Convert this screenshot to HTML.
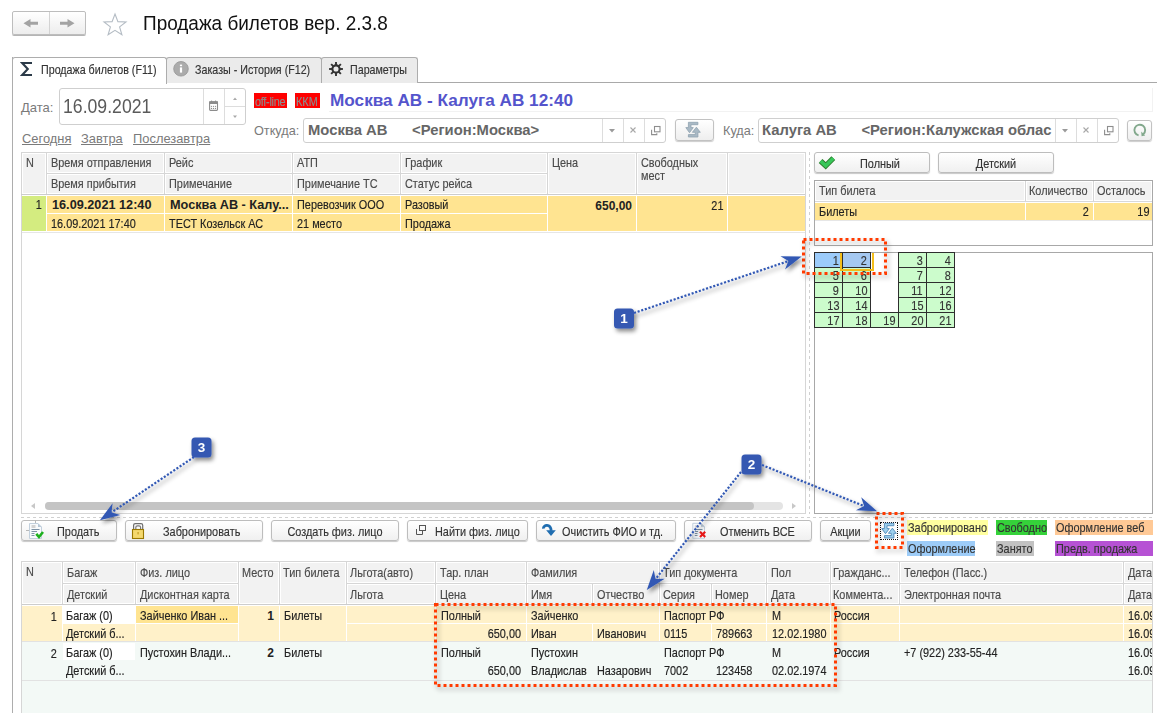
<!DOCTYPE html><html><head><meta charset="utf-8"><style>
*{margin:0;padding:0;box-sizing:border-box}
html,body{width:1157px;height:713px;overflow:hidden;background:#fff;font-family:"Liberation Sans",sans-serif;position:relative}
.t{position:absolute;white-space:nowrap;line-height:1}
.btn{position:absolute;border:1px solid #B9B9B9;border-radius:3px;background:linear-gradient(#FFFFFF,#F2F2F2);box-shadow:0 1px 1px rgba(0,0,0,0.18)}
</style></head><body><div style="position:absolute;left:12px;top:11px;width:74px;height:24px;border:1px solid #BDBDBD;border-radius:2px;background:linear-gradient(#FFFFFF,#EDEDED);box-shadow:0 1px 0 #B5B5B5"></div><div style="position:absolute;left:49px;top:12px;width:1px;height:22px;background:#D3D3D3"></div><svg style="position:absolute;left:12px;top:11px" width="74" height="24" viewBox="0 0 74 24">
<path d="M11.5 12.2 L18.5 8 V10.7 H26 V13.7 H18.5 V16.4 Z" fill="#A3A3A3"/>
<path d="M62.5 12.2 L55.5 8 V10.7 H48 V13.7 H55.5 V16.4 Z" fill="#A3A3A3"/>
</svg><svg style="position:absolute;left:102px;top:12px" width="26" height="26" viewBox="0 0 26 26">
<path d="M13 2 L15.9 9.6 L24 9.9 L17.6 14.9 L19.9 22.8 L13 18.3 L6.1 22.8 L8.4 14.9 L2 9.9 L10.1 9.6 Z" fill="none" stroke="#B4BCC4" stroke-width="1.1"/>
</svg><div class="t" style="left:143px;top:13px;font-size:20.5px;color:#111;font-weight:400;transform:scaleX(0.925);transform-origin:left">Продажа билетов вер. 2.3.8</div><div style="position:absolute;left:12px;top:82px;width:1145px;height:1px;background:#A9A9A9"></div><div style="position:absolute;left:12px;top:57px;width:1px;height:656px;background:#ADADAD"></div><div style="position:absolute;left:166px;top:57px;width:156px;height:26px;background:#EBEBEB;border:1px solid #ADADAD;border-bottom:none;border-radius:3px 3px 0 0"></div><div style="position:absolute;left:321px;top:57px;width:97px;height:26px;background:#EBEBEB;border:1px solid #ADADAD;border-bottom:none;border-radius:3px 3px 0 0"></div><div style="position:absolute;left:12px;top:57px;width:155px;height:27px;background:#fff;border:1px solid #ADADAD;border-bottom:none;border-radius:3px 3px 0 0"></div><svg style="position:absolute;left:20px;top:61px" width="14" height="16" viewBox="0 0 14 16">
<path d="M12 2 H2.2 L7.8 8 L2.2 14 H12" stroke="#2B3A48" stroke-width="2.1" fill="none" stroke-linejoin="miter"/>
</svg><div class="t" style="left:41px;top:65.0px;font-size:11.88px;color:#333;font-weight:400;;transform:scaleX(0.9);transform-origin:left;-webkit-text-stroke:0.15px currentColor">Продажа билетов (F11)</div><svg style="position:absolute;left:173px;top:61px" width="16" height="16" viewBox="0 0 16 16">
<circle cx="8" cy="7.8" r="7.3" fill="#ABABAB" stroke="#969696" stroke-width="0.8"/><rect x="6.9" y="3.6" width="2.2" height="1.6" fill="#fff"/><rect x="6.9" y="6.4" width="2.2" height="5.2" fill="#fff"/>
</svg><div class="t" style="left:195px;top:65.0px;font-size:11.88px;color:#333;font-weight:400;;transform:scaleX(0.9);transform-origin:left;-webkit-text-stroke:0.15px currentColor">Заказы - История (F12)</div><svg style="position:absolute;left:328px;top:61px" width="16" height="16" viewBox="0 0 16 16">
<circle cx="8" cy="8" r="3.6" fill="none" stroke="#333" stroke-width="2.1"/><path d="M11.60 8.00 L14.90 8.00" stroke="#333" stroke-width="1.9"/><path d="M10.55 10.55 L12.88 12.88" stroke="#333" stroke-width="1.9"/><path d="M8.00 11.60 L8.00 14.90" stroke="#333" stroke-width="1.9"/><path d="M5.45 10.55 L3.12 12.88" stroke="#333" stroke-width="1.9"/><path d="M4.40 8.00 L1.10 8.00" stroke="#333" stroke-width="1.9"/><path d="M5.45 5.45 L3.12 3.12" stroke="#333" stroke-width="1.9"/><path d="M8.00 4.40 L8.00 1.10" stroke="#333" stroke-width="1.9"/><path d="M10.55 5.45 L12.88 3.12" stroke="#333" stroke-width="1.9"/>
</svg><div class="t" style="left:350px;top:65.0px;font-size:11.88px;color:#333;font-weight:400;;transform:scaleX(0.9);transform-origin:left;-webkit-text-stroke:0.15px currentColor">Параметры</div><div class="t" style="left:21px;top:101px;font-size:13px;color:#7A7A7A;font-weight:400;">Дата:</div><div style="position:absolute;left:59px;top:88px;width:187px;height:37px;border:1px solid #CFCFCF;border-radius:3px;background:#fff"></div><div style="position:absolute;left:203px;top:89px;width:1px;height:35px;background:#DDDDDD"></div><div style="position:absolute;left:224px;top:89px;width:1px;height:35px;background:#DDDDDD"></div><div style="position:absolute;left:225px;top:106px;width:20px;height:1px;background:#DDDDDD"></div><div class="t" style="left:63px;top:97px;font-size:19.5px;color:#5A5A5A;font-weight:400;transform:scaleX(0.905);transform-origin:left">16.09.2021</div><svg style="position:absolute;left:208px;top:100px" width="11" height="12" viewBox="0 0 11 12">
<rect x="1.6" y="1.9" width="7.9" height="8.5" rx="0.8" fill="#fff" stroke="#8C8C8C" stroke-width="1.1"/>
<rect x="1.1" y="1.4" width="8.9" height="2.6" fill="#8C8C8C"/>
<rect x="3" y="0.6" width="1.1" height="1.6" fill="#8C8C8C"/><rect x="7" y="0.6" width="1.1" height="1.6" fill="#8C8C8C"/>
<g fill="#8C8C8C"><circle cx="3.5" cy="6.3" r="0.65"/><circle cx="5.5" cy="6.3" r="0.65"/><circle cx="7.5" cy="6.3" r="0.65"/>
<circle cx="3.5" cy="8.4" r="0.65"/><circle cx="5.5" cy="8.4" r="0.65"/><circle cx="7.5" cy="8.4" r="0.65"/></g>
</svg><svg style="position:absolute;left:231px;top:96px" width="8" height="24" viewBox="0 0 8 24">
<path d="M2 4 L6 4 L4 1.5 Z" fill="#A8A8A8"/><path d="M2 19.5 L6 19.5 L4 22 Z" fill="#A8A8A8"/>
</svg><div class="t" style="left:22px;top:133px;font-size:12.9px;color:#7A7A7A;font-weight:400;text-decoration:underline;">Сегодня</div><div class="t" style="left:81px;top:133px;font-size:12.9px;color:#7A7A7A;font-weight:400;text-decoration:underline;">Завтра</div><div class="t" style="left:133px;top:133px;font-size:12.9px;color:#7A7A7A;font-weight:400;text-decoration:underline;">Послезавтра</div><div style="position:absolute;left:254px;top:93px;width:33px;height:15px;background:#FF0000"></div><div class="t" style="left:255px;top:96.0px;font-size:12.10px;color:#8C8C8C;font-weight:400;letter-spacing:-0.3px;transform:scaleX(0.9);transform-origin:left;-webkit-text-stroke:0.15px currentColor">off-line</div><div style="position:absolute;left:295px;top:93px;width:25px;height:15px;background:#FF0000"></div><div class="t" style="left:296px;top:96.0px;font-size:12.10px;color:#8C8C8C;font-weight:400;;transform:scaleX(0.9);transform-origin:left;-webkit-text-stroke:0.15px currentColor">ККМ</div><div class="t" style="left:330px;top:92px;font-size:17.2px;color:#5454CC;font-weight:700;">Москва АВ - Калуга АВ 12:40</div><div style="position:absolute;left:329px;top:88px;width:824px;height:24px;border-right:1px solid #F2F2F2;border-bottom:1px solid #F2F2F2"></div><div class="t" style="left:254px;top:125px;font-size:12.7px;color:#7A7A7A;font-weight:400;">Откуда:</div><div style="position:absolute;left:303px;top:118px;width:363px;height:25px;border:1px solid #CFCFCF;border-radius:3px;background:#fff"></div><div style="position:absolute;left:602px;top:119px;width:1px;height:23px;background:#DDDDDD"></div><div style="position:absolute;left:623px;top:119px;width:1px;height:23px;background:#DDDDDD"></div><div style="position:absolute;left:644px;top:119px;width:1px;height:23px;background:#DDDDDD"></div><div class="t" style="left:308px;top:123px;font-size:14.8px;color:#666;font-weight:700;">Москва АВ&nbsp;&nbsp;&nbsp;&nbsp;&nbsp;&nbsp;&lt;Регион:Москва&gt;</div><svg style="position:absolute;left:602px;top:119px" width="63" height="23" viewBox="0 0 63 23">
<path d="M7 10 L13 10 L10 13.5 Z" fill="#9A9A9A"/>
<path d="M28.5 8.5 L33.5 13.5 M33.5 8.5 L28.5 13.5" stroke="#A8A8A8" stroke-width="1.1"/>
<rect x="52.5" y="7.5" width="5.5" height="5.3" fill="none" stroke="#8E8E8E" stroke-width="1.1"/>
<path d="M49.6 10.8 V15.6 H54.8 V14.3" fill="none" stroke="#8E8E8E" stroke-width="1.1"/>
</svg><div style="position:absolute;left:675px;top:119px;width:39px;height:22px;border:1px solid #C2C2C2;border-radius:3px;background:linear-gradient(#FFFFFF,#EEEEEE);box-shadow:0 1px 1px rgba(0,0,0,0.2)"></div><svg style="position:absolute;left:684px;top:121px" width="18" height="18" viewBox="0 0 18 18">
<path d="M13.9 1.3 V3.7 H7 V6.6 H9.3 L5.5 11.7 L1.8 6.6 H4.4 V1.3 Z" fill="#A9B9C5" stroke="#8FA2B0" stroke-width="0.8"/>
<path d="M12.4 6.2 L16.3 11.3 H13.9 V16 H4.4 V13.6 H11.3 V11.3 H8.4 Z" fill="#A9B9C5" stroke="#8FA2B0" stroke-width="0.8"/>
</svg><div class="t" style="left:723px;top:125px;font-size:12.7px;color:#7A7A7A;font-weight:400;">Куда:</div><div style="position:absolute;left:758px;top:118px;width:361px;height:25px;border:1px solid #CFCFCF;border-radius:3px;background:#fff"></div><div style="position:absolute;left:1055px;top:119px;width:1px;height:23px;background:#DDDDDD"></div><div style="position:absolute;left:1076px;top:119px;width:1px;height:23px;background:#DDDDDD"></div><div style="position:absolute;left:1097px;top:119px;width:1px;height:23px;background:#DDDDDD"></div><div class="t" style="left:762px;top:123px;font-size:14.8px;color:#666;font-weight:700;">Калуга АВ&nbsp;&nbsp;&nbsp;&nbsp;&nbsp;&nbsp;&lt;Регион:Калужская облас</div><svg style="position:absolute;left:1055px;top:119px" width="63" height="23" viewBox="0 0 63 23">
<path d="M7 10 L13 10 L10 13.5 Z" fill="#9A9A9A"/>
<path d="M28.5 8.5 L33.5 13.5 M33.5 8.5 L28.5 13.5" stroke="#A8A8A8" stroke-width="1.1"/>
<rect x="52.5" y="7.5" width="5.5" height="5.3" fill="none" stroke="#8E8E8E" stroke-width="1.1"/>
<path d="M49.6 10.8 V15.6 H54.8 V14.3" fill="none" stroke="#8E8E8E" stroke-width="1.1"/>
</svg><div style="position:absolute;left:1127px;top:120px;width:25px;height:21px;border:1px solid #C2C2C2;border-radius:3px;background:linear-gradient(#FFFFFF,#EEEEEE);box-shadow:0 1px 1px rgba(0,0,0,0.2)"></div><svg style="position:absolute;left:1132px;top:122px" width="16" height="16" viewBox="0 0 16 16">
<path d="M6.6 13.4 A5.4 5.4 0 1 1 11.2 12.3" fill="none" stroke="#82A88C" stroke-width="1.9"/>
<path d="M9.2 9.6 L13.2 13.6 L9.6 14.2 Z" fill="#82A88C"/>
</svg><div style="position:absolute;left:21px;top:152px;width:785px;height:362px;border:1px solid #D6D6D6;background:#fff"></div><div style="position:absolute;left:21px;top:194px;width:784px;height:1px;background:#CDCDCD"></div><div style="position:absolute;left:46px;top:153px;width:1px;height:41px;background:#D6D6D6"></div><div style="position:absolute;left:164px;top:153px;width:1px;height:41px;background:#D6D6D6"></div><div style="position:absolute;left:292px;top:153px;width:1px;height:41px;background:#D6D6D6"></div><div style="position:absolute;left:400px;top:153px;width:1px;height:41px;background:#D6D6D6"></div><div style="position:absolute;left:547px;top:153px;width:1px;height:41px;background:#D6D6D6"></div><div style="position:absolute;left:636px;top:153px;width:1px;height:41px;background:#D6D6D6"></div><div style="position:absolute;left:727px;top:153px;width:1px;height:41px;background:#D6D6D6"></div><div style="position:absolute;left:46px;top:173px;width:501px;height:1px;background:#D6D6D6"></div><div style="position:absolute;left:22px;top:153px;width:24px;height:41px;background:#F2F2F2;box-shadow:inset 0 0 0 1px #fff"></div><div class="t" style="left:26px;top:157.0px;font-size:12.10px;color:#4A4A4A;transform:scaleX(0.9);transform-origin:left;-webkit-text-stroke:0.15px currentColor">N</div><div style="position:absolute;left:47px;top:153px;width:117px;height:20px;background:#F2F2F2;box-shadow:inset 0 0 0 1px #fff"></div><div class="t" style="left:51px;top:157.0px;font-size:12.10px;color:#4A4A4A;transform:scaleX(0.9);transform-origin:left;-webkit-text-stroke:0.15px currentColor">Время отправления</div><div style="position:absolute;left:47px;top:174px;width:117px;height:20px;background:#F2F2F2;box-shadow:inset 0 0 0 1px #fff"></div><div class="t" style="left:51px;top:178.0px;font-size:12.10px;color:#4A4A4A;transform:scaleX(0.9);transform-origin:left;-webkit-text-stroke:0.15px currentColor">Время прибытия</div><div style="position:absolute;left:165px;top:153px;width:127px;height:20px;background:#F2F2F2;box-shadow:inset 0 0 0 1px #fff"></div><div class="t" style="left:169px;top:157.0px;font-size:12.10px;color:#4A4A4A;transform:scaleX(0.9);transform-origin:left;-webkit-text-stroke:0.15px currentColor">Рейс</div><div style="position:absolute;left:165px;top:174px;width:127px;height:20px;background:#F2F2F2;box-shadow:inset 0 0 0 1px #fff"></div><div class="t" style="left:169px;top:178.0px;font-size:12.10px;color:#4A4A4A;transform:scaleX(0.9);transform-origin:left;-webkit-text-stroke:0.15px currentColor">Примечание</div><div style="position:absolute;left:293px;top:153px;width:107px;height:20px;background:#F2F2F2;box-shadow:inset 0 0 0 1px #fff"></div><div class="t" style="left:297px;top:157.0px;font-size:12.10px;color:#4A4A4A;transform:scaleX(0.9);transform-origin:left;-webkit-text-stroke:0.15px currentColor">АТП</div><div style="position:absolute;left:293px;top:174px;width:107px;height:20px;background:#F2F2F2;box-shadow:inset 0 0 0 1px #fff"></div><div class="t" style="left:297px;top:178.0px;font-size:12.10px;color:#4A4A4A;transform:scaleX(0.9);transform-origin:left;-webkit-text-stroke:0.15px currentColor">Примечание ТС</div><div style="position:absolute;left:401px;top:153px;width:146px;height:20px;background:#F2F2F2;box-shadow:inset 0 0 0 1px #fff"></div><div class="t" style="left:405px;top:157.0px;font-size:12.10px;color:#4A4A4A;transform:scaleX(0.9);transform-origin:left;-webkit-text-stroke:0.15px currentColor">График</div><div style="position:absolute;left:401px;top:174px;width:146px;height:20px;background:#F2F2F2;box-shadow:inset 0 0 0 1px #fff"></div><div class="t" style="left:405px;top:178.0px;font-size:12.10px;color:#4A4A4A;transform:scaleX(0.9);transform-origin:left;-webkit-text-stroke:0.15px currentColor">Статус рейса</div><div style="position:absolute;left:548px;top:153px;width:88px;height:41px;background:#F2F2F2;box-shadow:inset 0 0 0 1px #fff"></div><div class="t" style="left:552px;top:157.0px;font-size:12.10px;color:#4A4A4A;transform:scaleX(0.9);transform-origin:left;-webkit-text-stroke:0.15px currentColor">Цена</div><div style="position:absolute;left:637px;top:153px;width:90px;height:41px;background:#F2F2F2;box-shadow:inset 0 0 0 1px #fff"></div><div class="t" style="left:641px;top:157.0px;font-size:12.10px;color:#4A4A4A;line-height:13px;transform:scaleX(0.9);transform-origin:left;-webkit-text-stroke:0.15px currentColor">Свободных<br>мест</div><div style="position:absolute;left:728px;top:153px;width:77px;height:41px;background:#F2F2F2;box-shadow:inset 0 0 0 1px #fff"></div><div style="position:absolute;left:22px;top:195px;width:783px;height:37px;background:#fff"></div><div style="position:absolute;left:22px;top:196px;width:24px;height:35px;background:#D4EC80"></div><div class="t" style="right:1115px;top:199.0px;font-size:12.10px;color:#222;font-weight:400;transform:scaleX(0.9);transform-origin:right;-webkit-text-stroke:0.15px currentColor">1</div><div style="position:absolute;left:47px;top:196px;width:117px;height:17px;background:#FFE491"></div><div class="t" style="left:52px;top:199px;font-size:12.7px;color:#222;font-weight:700">16.09.2021 12:40</div><div style="position:absolute;left:47px;top:214px;width:117px;height:17px;background:#FFE491"></div><div class="t" style="left:51px;top:218.0px;font-size:12.10px;color:#222;font-weight:400;transform:scaleX(0.9);transform-origin:left;-webkit-text-stroke:0.15px currentColor">16.09.2021 17:40</div><div style="position:absolute;left:165px;top:196px;width:127px;height:17px;background:#FFE491"></div><div class="t" style="left:170px;top:199px;font-size:12.7px;color:#222;font-weight:700">Москва АВ - Калу...</div><div style="position:absolute;left:165px;top:214px;width:127px;height:17px;background:#FFE491"></div><div class="t" style="left:169px;top:218.0px;font-size:12.10px;color:#222;font-weight:400;transform:scaleX(0.9);transform-origin:left;-webkit-text-stroke:0.15px currentColor">ТЕСТ Козельск АС</div><div style="position:absolute;left:293px;top:196px;width:107px;height:17px;background:#FFE491"></div><div class="t" style="left:297px;top:199.0px;font-size:12.10px;color:#222;font-weight:400;transform:scaleX(0.9);transform-origin:left;-webkit-text-stroke:0.15px currentColor">Перевозчик ООО</div><div style="position:absolute;left:293px;top:214px;width:107px;height:17px;background:#FFE491"></div><div class="t" style="left:297px;top:218.0px;font-size:12.10px;color:#222;font-weight:400;transform:scaleX(0.9);transform-origin:left;-webkit-text-stroke:0.15px currentColor">21 место</div><div style="position:absolute;left:401px;top:196px;width:146px;height:17px;background:#FFE491"></div><div class="t" style="left:405px;top:199.0px;font-size:12.10px;color:#222;font-weight:400;transform:scaleX(0.9);transform-origin:left;-webkit-text-stroke:0.15px currentColor">Разовый</div><div style="position:absolute;left:401px;top:214px;width:146px;height:17px;background:#FFE491"></div><div class="t" style="left:405px;top:218.0px;font-size:12.10px;color:#222;font-weight:400;transform:scaleX(0.9);transform-origin:left;-webkit-text-stroke:0.15px currentColor">Продажа</div><div style="position:absolute;left:548px;top:196px;width:88px;height:35px;background:#FFE491"></div><div class="t" style="right:525px;top:200px;font-size:12px;color:#222;font-weight:700">650,00</div><div style="position:absolute;left:637px;top:196px;width:90px;height:35px;background:#FFE491"></div><div class="t" style="right:434px;top:200.0px;font-size:12.10px;color:#222;font-weight:400;transform:scaleX(0.9);transform-origin:right;-webkit-text-stroke:0.15px currentColor">21</div><div style="position:absolute;left:728px;top:196px;width:77px;height:35px;background:#FFE491"></div><div style="position:absolute;left:22px;top:232px;width:783px;height:1px;background:#E6E6E6"></div><svg style="position:absolute;left:28px;top:501px" width="775" height="10" viewBox="0 0 775 10">
<path d="M3 5 L7 2 L7 8 Z" fill="#C8C8C8"/>
<rect x="17" y="1" width="738" height="8" rx="4" fill="#E4E4E4"/>
<rect x="17" y="1" width="709" height="8" rx="4" fill="#C4C4C4"/>
<path d="M764 2 L768 5 L764 8 Z" fill="#C8C8C8"/>
</svg><div style="position:absolute;left:809px;top:152px;width:1px;height:362px;background:repeating-linear-gradient(180deg,#D0D0D0 0 3px,transparent 3px 6px)"></div><div style="position:absolute;left:21px;top:517px;width:1132px;height:1px;background:repeating-linear-gradient(90deg,#D0D0D0 0 3px,transparent 3px 6px)"></div><div style="position:absolute;left:814px;top:152px;width:116px;height:21px;border:1px solid #BDBDBD;border-radius:3px;background:linear-gradient(#FFFFFF,#F0F0F0);box-shadow:0 1px 1px rgba(0,0,0,0.22)"></div><div class="t" style="left:860px;top:158.0px;font-size:12.10px;color:#333;transform:scaleX(0.9);transform-origin:left;-webkit-text-stroke:0.15px currentColor">Полный</div><svg style="position:absolute;left:812px;top:150px" width="30" height="26" viewBox="812 150 30 26">
<path d="M820.6 161 L825.7 165.8 L833.3 158.2" fill="none" stroke="#2C7A2C" stroke-width="5.4" stroke-linejoin="miter" stroke-linecap="butt"/>
<path d="M820.6 161 L825.7 165.8 L833.3 158.2" fill="none" stroke="#38C659" stroke-width="3.6" stroke-linejoin="miter" stroke-linecap="butt"/>
</svg><div style="position:absolute;left:938px;top:152px;width:116px;height:21px;border:1px solid #BDBDBD;border-radius:3px;background:linear-gradient(#FFFFFF,#F0F0F0);box-shadow:0 1px 1px rgba(0,0,0,0.22)"></div><div class="t" style="left:938px;width:116px;text-align:center;top:158.0px;font-size:12.10px;color:#333;transform:scaleX(0.9);transform-origin:center;-webkit-text-stroke:0.15px currentColor">Детский</div><div style="position:absolute;left:814px;top:180px;width:339px;height:66px;border:1px solid #A8A8A8;background:#fff"></div><div style="position:absolute;left:815px;top:181px;width:210px;height:20px;background:#F2F2F2;box-shadow:inset 0 0 0 1px #fff"></div><div class="t" style="left:819px;top:185.0px;font-size:12.10px;color:#4A4A4A;transform:scaleX(0.9);transform-origin:left;-webkit-text-stroke:0.15px currentColor">Тип билета</div><div style="position:absolute;left:1026px;top:181px;width:67px;height:20px;background:#F2F2F2;box-shadow:inset 0 0 0 1px #fff"></div><div class="t" style="left:1029px;top:185.0px;font-size:12.10px;color:#4A4A4A;transform:scaleX(0.9);transform-origin:left;-webkit-text-stroke:0.15px currentColor">Количество</div><div style="position:absolute;left:1094px;top:181px;width:58px;height:20px;background:#F2F2F2;box-shadow:inset 0 0 0 1px #fff"></div><div class="t" style="left:1097px;top:185.0px;font-size:12.10px;color:#4A4A4A;transform:scaleX(0.9);transform-origin:left;-webkit-text-stroke:0.15px currentColor">Осталось</div><div style="position:absolute;left:1025px;top:181px;width:1px;height:20px;background:#D6D6D6"></div><div style="position:absolute;left:1093px;top:181px;width:1px;height:20px;background:#D6D6D6"></div><div style="position:absolute;left:815px;top:201px;width:337px;height:1px;background:#D8D8D8"></div><div style="position:absolute;left:815px;top:203px;width:210px;height:17px;background:#FFE491"></div><div class="t" style="left:819px;top:206.0px;font-size:12.10px;color:#222;font-weight:400;transform:scaleX(0.9);transform-origin:left;-webkit-text-stroke:0.15px currentColor">Билеты</div><div style="position:absolute;left:1026px;top:203px;width:67px;height:17px;background:#FFE491"></div><div class="t" style="right:68px;top:206.0px;font-size:12.10px;color:#222;font-weight:400;transform:scaleX(0.9);transform-origin:right;-webkit-text-stroke:0.15px currentColor">2</div><div style="position:absolute;left:1094px;top:203px;width:58px;height:17px;background:#FFE491"></div><div class="t" style="right:8px;top:206.0px;font-size:12.10px;color:#222;font-weight:400;transform:scaleX(0.9);transform-origin:right;-webkit-text-stroke:0.15px currentColor">19</div><div style="position:absolute;left:815px;top:220px;width:337px;height:1px;background:#E6E6E6"></div><div style="position:absolute;left:814px;top:252px;width:339px;height:262px;border:1px solid #A8A8A8;background:#fff"></div><div style="position:absolute;left:814px;top:252px;width:29px;height:16px;background:#9CCBFA;border:1px solid #2E2E2E"></div><div class="t" style="right:318px;top:255.0px;font-size:12.10px;color:#333;transform:scaleX(0.9);transform-origin:right;-webkit-text-stroke:0.15px currentColor">1</div><div style="position:absolute;left:842px;top:252px;width:29px;height:16px;background:#A5C8F0;border:1px solid #2E2E2E"></div><div class="t" style="right:290px;top:255.0px;font-size:12.10px;color:#333;transform:scaleX(0.9);transform-origin:right;-webkit-text-stroke:0.15px currentColor">2</div><div style="position:absolute;left:898px;top:252px;width:29px;height:16px;background:#CCFCCC;border:1px solid #2E2E2E"></div><div class="t" style="right:234px;top:255.0px;font-size:12.10px;color:#333;transform:scaleX(0.9);transform-origin:right;-webkit-text-stroke:0.15px currentColor">3</div><div style="position:absolute;left:926px;top:252px;width:29px;height:16px;background:#CCFCCC;border:1px solid #2E2E2E"></div><div class="t" style="right:206px;top:255.0px;font-size:12.10px;color:#333;transform:scaleX(0.9);transform-origin:right;-webkit-text-stroke:0.15px currentColor">4</div><div style="position:absolute;left:814px;top:267px;width:29px;height:16px;background:#CCFCCC;border:1px solid #2E2E2E"></div><div class="t" style="right:318px;top:270.0px;font-size:12.10px;color:#333;transform:scaleX(0.9);transform-origin:right;-webkit-text-stroke:0.15px currentColor">5</div><div style="position:absolute;left:842px;top:267px;width:29px;height:16px;background:#CCFCCC;border:1px solid #2E2E2E"></div><div class="t" style="right:290px;top:270.0px;font-size:12.10px;color:#333;transform:scaleX(0.9);transform-origin:right;-webkit-text-stroke:0.15px currentColor">6</div><div style="position:absolute;left:898px;top:267px;width:29px;height:16px;background:#CCFCCC;border:1px solid #2E2E2E"></div><div class="t" style="right:234px;top:270.0px;font-size:12.10px;color:#333;transform:scaleX(0.9);transform-origin:right;-webkit-text-stroke:0.15px currentColor">7</div><div style="position:absolute;left:926px;top:267px;width:29px;height:16px;background:#CCFCCC;border:1px solid #2E2E2E"></div><div class="t" style="right:206px;top:270.0px;font-size:12.10px;color:#333;transform:scaleX(0.9);transform-origin:right;-webkit-text-stroke:0.15px currentColor">8</div><div style="position:absolute;left:814px;top:282px;width:29px;height:16px;background:#CCFCCC;border:1px solid #2E2E2E"></div><div class="t" style="right:318px;top:285.0px;font-size:12.10px;color:#333;transform:scaleX(0.9);transform-origin:right;-webkit-text-stroke:0.15px currentColor">9</div><div style="position:absolute;left:842px;top:282px;width:29px;height:16px;background:#CCFCCC;border:1px solid #2E2E2E"></div><div class="t" style="right:290px;top:285.0px;font-size:12.10px;color:#333;transform:scaleX(0.9);transform-origin:right;-webkit-text-stroke:0.15px currentColor">10</div><div style="position:absolute;left:898px;top:282px;width:29px;height:16px;background:#CCFCCC;border:1px solid #2E2E2E"></div><div class="t" style="right:234px;top:285.0px;font-size:12.10px;color:#333;transform:scaleX(0.9);transform-origin:right;-webkit-text-stroke:0.15px currentColor">11</div><div style="position:absolute;left:926px;top:282px;width:29px;height:16px;background:#CCFCCC;border:1px solid #2E2E2E"></div><div class="t" style="right:206px;top:285.0px;font-size:12.10px;color:#333;transform:scaleX(0.9);transform-origin:right;-webkit-text-stroke:0.15px currentColor">12</div><div style="position:absolute;left:814px;top:297px;width:29px;height:16px;background:#CCFCCC;border:1px solid #2E2E2E"></div><div class="t" style="right:318px;top:300.0px;font-size:12.10px;color:#333;transform:scaleX(0.9);transform-origin:right;-webkit-text-stroke:0.15px currentColor">13</div><div style="position:absolute;left:842px;top:297px;width:29px;height:16px;background:#CCFCCC;border:1px solid #2E2E2E"></div><div class="t" style="right:290px;top:300.0px;font-size:12.10px;color:#333;transform:scaleX(0.9);transform-origin:right;-webkit-text-stroke:0.15px currentColor">14</div><div style="position:absolute;left:898px;top:297px;width:29px;height:16px;background:#CCFCCC;border:1px solid #2E2E2E"></div><div class="t" style="right:234px;top:300.0px;font-size:12.10px;color:#333;transform:scaleX(0.9);transform-origin:right;-webkit-text-stroke:0.15px currentColor">15</div><div style="position:absolute;left:926px;top:297px;width:29px;height:16px;background:#CCFCCC;border:1px solid #2E2E2E"></div><div class="t" style="right:206px;top:300.0px;font-size:12.10px;color:#333;transform:scaleX(0.9);transform-origin:right;-webkit-text-stroke:0.15px currentColor">16</div><div style="position:absolute;left:814px;top:312px;width:29px;height:16px;background:#CCFCCC;border:1px solid #2E2E2E"></div><div class="t" style="right:318px;top:315.0px;font-size:12.10px;color:#333;transform:scaleX(0.9);transform-origin:right;-webkit-text-stroke:0.15px currentColor">17</div><div style="position:absolute;left:842px;top:312px;width:29px;height:16px;background:#CCFCCC;border:1px solid #2E2E2E"></div><div class="t" style="right:290px;top:315.0px;font-size:12.10px;color:#333;transform:scaleX(0.9);transform-origin:right;-webkit-text-stroke:0.15px currentColor">18</div><div style="position:absolute;left:870px;top:312px;width:29px;height:16px;background:#CCFCCC;border:1px solid #2E2E2E"></div><div class="t" style="right:262px;top:315.0px;font-size:12.10px;color:#333;transform:scaleX(0.9);transform-origin:right;-webkit-text-stroke:0.15px currentColor">19</div><div style="position:absolute;left:898px;top:312px;width:29px;height:16px;background:#CCFCCC;border:1px solid #2E2E2E"></div><div class="t" style="right:234px;top:315.0px;font-size:12.10px;color:#333;transform:scaleX(0.9);transform-origin:right;-webkit-text-stroke:0.15px currentColor">20</div><div style="position:absolute;left:926px;top:312px;width:29px;height:16px;background:#CCFCCC;border:1px solid #2E2E2E"></div><div class="t" style="right:206px;top:315.0px;font-size:12.10px;color:#333;transform:scaleX(0.9);transform-origin:right;-webkit-text-stroke:0.15px currentColor">21</div><div style="position:absolute;left:840px;top:253px;width:34px;height:18px;border:2px solid #F4BE1A;border-top:none"></div><div style="position:absolute;left:21px;top:520px;width:96px;height:21px;border:1px solid #BDBDBD;border-radius:3px;background:linear-gradient(#FFFFFF,#F0F0F0);box-shadow:0 1px 1px rgba(0,0,0,0.22)"></div><div class="t" style="left:57px;top:526.0px;font-size:12.10px;color:#333;transform:scaleX(0.9);transform-origin:left;-webkit-text-stroke:0.15px currentColor">Продать</div><svg style="position:absolute;left:20px;top:518px" width="30" height="25" viewBox="20 518 30 25">
<path d="M29.5 523.5 H38 L41.5 527 V538.5 H29.5 Z" fill="#F8FAFC" stroke="#C2D0DD"/>
<path d="M38 523.5 V527 H41.5 Z" fill="#B5C6D6"/>
<rect x="31.5" y="525" width="4" height="3" fill="#D3D3D3"/>
<g stroke="#7D92A6" stroke-width="1"><path d="M31.5 529.5 H39.5"/><path d="M31.5 531.5 H37"/><path d="M31.5 533.5 H34.5"/><path d="M31.5 535.5 H34.5"/></g>
<path d="M26 530.5 H29" stroke="#B8B8B8"/><path d="M35.5 520 V523" stroke="#B8B8B8"/>
<path d="M36.3 533.8 L39 537 L43 532" fill="none" stroke="#1DB01D" stroke-width="2.6"/>
</svg><div style="position:absolute;left:125px;top:520px;width:138px;height:21px;border:1px solid #BDBDBD;border-radius:3px;background:linear-gradient(#FFFFFF,#F0F0F0);box-shadow:0 1px 1px rgba(0,0,0,0.22)"></div><div class="t" style="left:163px;top:526.0px;font-size:12.10px;color:#333;transform:scaleX(0.9);transform-origin:left;-webkit-text-stroke:0.15px currentColor">Забронировать</div><svg style="position:absolute;left:125px;top:518px" width="25" height="25" viewBox="125 518 25 25">
<path d="M133.6 529 V525.3 Q133.6 523.6 135.3 523.6 H141 Q142.7 523.6 142.7 525.3 V529" fill="none" stroke="#6E6E6E" stroke-width="1.2"/>
<path d="M135.8 529 V527.4 Q135.8 525.8 137.4 525.8 H139 Q140.6 525.8 140.6 527.4 V529" fill="none" stroke="#7A7A7A" stroke-width="1.2"/>
<rect x="132.5" y="529.5" width="11" height="9" fill="#F4D86E" stroke="#9A7800" stroke-width="1.1"/>
<rect x="137.4" y="532" width="1.4" height="2.4" fill="#C9A32E"/>
</svg><div style="position:absolute;left:271px;top:520px;width:128px;height:21px;border:1px solid #BDBDBD;border-radius:3px;background:linear-gradient(#FFFFFF,#F0F0F0);box-shadow:0 1px 1px rgba(0,0,0,0.22)"></div><div class="t" style="left:271px;width:128px;text-align:center;top:526.0px;font-size:12.10px;color:#333;transform:scaleX(0.9);transform-origin:center;-webkit-text-stroke:0.15px currentColor">Создать физ. лицо</div><div style="position:absolute;left:407px;top:520px;width:121px;height:21px;border:1px solid #BDBDBD;border-radius:3px;background:linear-gradient(#FFFFFF,#F0F0F0);box-shadow:0 1px 1px rgba(0,0,0,0.22)"></div><div class="t" style="left:435px;top:526.0px;font-size:12.10px;color:#333;transform:scaleX(0.9);transform-origin:left;-webkit-text-stroke:0.15px currentColor">Найти физ. лицо</div><svg style="position:absolute;left:416px;top:525px" width="11" height="11" viewBox="0 0 11 11">
<rect x="3.5" y="0.5" width="6" height="5" fill="none" stroke="#555"/>
<path d="M0.5 4 V9.5 H6.5 V6" fill="none" stroke="#555"/>
</svg><div style="position:absolute;left:536px;top:520px;width:140px;height:21px;border:1px solid #BDBDBD;border-radius:3px;background:linear-gradient(#FFFFFF,#F0F0F0);box-shadow:0 1px 1px rgba(0,0,0,0.22)"></div><div class="t" style="left:562px;top:526.0px;font-size:12.10px;color:#333;transform:scaleX(0.9);transform-origin:left;-webkit-text-stroke:0.15px currentColor">Очистить ФИО и тд.</div><svg style="position:absolute;left:535px;top:518px" width="25" height="25" viewBox="535 518 25 25">
<path d="M543.4 528.6 C543.2 524.6 550.6 523.4 551.2 530.8" fill="none" stroke="#1F6DB0" stroke-width="2.8"/>
<path d="M546.2 530.2 H555.8 L551 536 Z" fill="#1F6DB0"/>
</svg><div style="position:absolute;left:684px;top:520px;width:128px;height:21px;border:1px solid #BDBDBD;border-radius:3px;background:linear-gradient(#FFFFFF,#F0F0F0);box-shadow:0 1px 1px rgba(0,0,0,0.22)"></div><div class="t" style="left:720px;top:526.0px;font-size:12.10px;color:#333;transform:scaleX(0.9);transform-origin:left;-webkit-text-stroke:0.15px currentColor">Отменить ВСЕ</div><svg style="position:absolute;left:684px;top:516px" width="30" height="30" viewBox="684 516 30 30">
<path d="M692.8 523.3 H701 L704.5 526.8 V538.3 H692.8 Z" fill="#F8FAFC" stroke="#C2D0DD"/>
<path d="M701 523.3 V526.8 H704.5 Z" fill="#B5C6D6"/>
<rect x="694.8" y="525.2" width="4" height="2.6" fill="#D3D3D3"/>
<g stroke="#7D92A6" stroke-width="1"><path d="M694.8 529.5 H702.5"/><path d="M694.8 531.5 H698"/><path d="M694.8 533.5 H697.5"/><path d="M694.8 535.5 H697.5"/></g>
<path d="M700 531.8 L705.2 537 M705.2 531.8 L700 537" stroke="#E81818" stroke-width="2.2"/>
</svg><div style="position:absolute;left:820px;top:520px;width:51px;height:21px;border:1px solid #BDBDBD;border-radius:3px;background:linear-gradient(#FFFFFF,#F0F0F0);box-shadow:0 1px 1px rgba(0,0,0,0.22)"></div><div class="t" style="left:820px;width:51px;text-align:center;top:526.0px;font-size:12.10px;color:#333;transform:scaleX(0.9);transform-origin:center;-webkit-text-stroke:0.15px currentColor">Акции</div><div style="position:absolute;left:880px;top:522px;width:18px;height:18px;border:1px dotted #111"></div><svg style="position:absolute;left:880px;top:522px" width="18" height="18" viewBox="0 0 18 18">
<path d="M13.9 1.3 V3.7 H7 V6.6 H9.3 L5.5 11.7 L1.8 6.6 H4.4 V1.3 Z" fill="#9DD0EE" stroke="#4F89B8" stroke-width="0.9"/>
<path d="M12.4 6.2 L16.3 11.3 H13.9 V16 H4.4 V13.6 H11.3 V11.3 H8.4 Z" fill="#9DD0EE" stroke="#4F89B8" stroke-width="0.9"/>
</svg><div style="position:absolute;left:907px;top:520px;width:81px;height:15px;background:#FFFFA0"></div><div class="t" style="left:908px;top:522.0px;font-size:12.10px;color:#333;transform:scaleX(0.9);transform-origin:left;-webkit-text-stroke:0.15px currentColor">Забронировано</div><div style="position:absolute;left:996px;top:520px;width:51px;height:15px;background:#35D23A"></div><div class="t" style="left:997px;top:522.0px;font-size:12.10px;color:#333;transform:scaleX(0.9);transform-origin:left;-webkit-text-stroke:0.15px currentColor">Свободно</div><div style="position:absolute;left:1055px;top:520px;width:98px;height:15px;background:#FFC996"></div><div class="t" style="left:1056px;top:522.0px;font-size:12.10px;color:#333;transform:scaleX(0.9);transform-origin:left;-webkit-text-stroke:0.15px currentColor">Оформление веб</div><div style="position:absolute;left:907px;top:541px;width:68px;height:15px;background:#9DCCF8"></div><div class="t" style="left:908px;top:543.0px;font-size:12.10px;color:#333;transform:scaleX(0.9);transform-origin:left;-webkit-text-stroke:0.15px currentColor">Оформление</div><div style="position:absolute;left:996px;top:541px;width:38px;height:15px;background:#C2C2C2"></div><div class="t" style="left:997px;top:543.0px;font-size:12.10px;color:#333;transform:scaleX(0.9);transform-origin:left;-webkit-text-stroke:0.15px currentColor">Занято</div><div style="position:absolute;left:1055px;top:541px;width:98px;height:15px;background:#B652D4"></div><div class="t" style="left:1056px;top:543.0px;font-size:12.10px;color:#333;transform:scaleX(0.9);transform-origin:left;-webkit-text-stroke:0.15px currentColor">Предв. продажа</div><div style="position:absolute;left:21px;top:561px;width:1132px;height:160px;border:1px solid #D6D6D6;background:#F3F9F6"></div><div style="position:absolute;left:0;top:0;width:1157px;height:713px;clip-path:inset(0 5px 0 0)"><div style="position:absolute;left:22px;top:562px;width:1131px;height:43px;background:#fff"></div><div style="position:absolute;left:22px;top:604px;width:1131px;height:1px;background:#CDCDCD"></div><div style="position:absolute;left:62px;top:562px;width:1px;height:42px;background:#D6D6D6"></div><div style="position:absolute;left:135px;top:562px;width:1px;height:42px;background:#D6D6D6"></div><div style="position:absolute;left:238px;top:562px;width:1px;height:42px;background:#D6D6D6"></div><div style="position:absolute;left:279px;top:562px;width:1px;height:42px;background:#D6D6D6"></div><div style="position:absolute;left:346px;top:562px;width:1px;height:42px;background:#D6D6D6"></div><div style="position:absolute;left:435px;top:562px;width:1px;height:42px;background:#D6D6D6"></div><div style="position:absolute;left:526px;top:562px;width:1px;height:42px;background:#D6D6D6"></div><div style="position:absolute;left:659px;top:562px;width:1px;height:42px;background:#D6D6D6"></div><div style="position:absolute;left:766px;top:562px;width:1px;height:42px;background:#D6D6D6"></div><div style="position:absolute;left:830px;top:562px;width:1px;height:42px;background:#D6D6D6"></div><div style="position:absolute;left:899px;top:562px;width:1px;height:42px;background:#D6D6D6"></div><div style="position:absolute;left:1123px;top:562px;width:1px;height:42px;background:#D6D6D6"></div><div style="position:absolute;left:62px;top:583px;width:176px;height:1px;background:#D6D6D6"></div><div style="position:absolute;left:346px;top:583px;width:807px;height:1px;background:#D6D6D6"></div><div style="position:absolute;left:592px;top:583px;width:1px;height:21px;background:#D6D6D6"></div><div style="position:absolute;left:711px;top:583px;width:1px;height:21px;background:#D6D6D6"></div><div style="position:absolute;left:22px;top:562px;width:40px;height:42px;background:#F2F2F2;box-shadow:inset 0 0 0 1px #fff"></div><div class="t" style="left:26px;top:566.0px;font-size:12.10px;color:#4A4A4A;transform:scaleX(0.9);transform-origin:left;-webkit-text-stroke:0.15px currentColor">N</div><div style="position:absolute;left:63px;top:562px;width:72px;height:21px;background:#F2F2F2;box-shadow:inset 0 0 0 1px #fff"></div><div class="t" style="left:67px;top:567.0px;font-size:12.10px;color:#4A4A4A;transform:scaleX(0.9);transform-origin:left;-webkit-text-stroke:0.15px currentColor">Багаж</div><div style="position:absolute;left:63px;top:584px;width:72px;height:20px;background:#F2F2F2;box-shadow:inset 0 0 0 1px #fff"></div><div class="t" style="left:67px;top:589.0px;font-size:12.10px;color:#4A4A4A;transform:scaleX(0.9);transform-origin:left;-webkit-text-stroke:0.15px currentColor">Детский</div><div style="position:absolute;left:136px;top:562px;width:102px;height:21px;background:#F2F2F2;box-shadow:inset 0 0 0 1px #fff"></div><div class="t" style="left:140px;top:567.0px;font-size:12.10px;color:#4A4A4A;transform:scaleX(0.9);transform-origin:left;-webkit-text-stroke:0.15px currentColor">Физ. лицо</div><div style="position:absolute;left:136px;top:584px;width:102px;height:20px;background:#F2F2F2;box-shadow:inset 0 0 0 1px #fff"></div><div class="t" style="left:140px;top:589.0px;font-size:12.10px;color:#4A4A4A;transform:scaleX(0.9);transform-origin:left;-webkit-text-stroke:0.15px currentColor">Дисконтная карта</div><div style="position:absolute;left:239px;top:562px;width:40px;height:42px;background:#F2F2F2;box-shadow:inset 0 0 0 1px #fff"></div><div class="t" style="left:242px;top:567.0px;font-size:12.10px;color:#4A4A4A;transform:scaleX(0.9);transform-origin:left;-webkit-text-stroke:0.15px currentColor">Место</div><div style="position:absolute;left:280px;top:562px;width:66px;height:42px;background:#F2F2F2;box-shadow:inset 0 0 0 1px #fff"></div><div class="t" style="left:283px;top:567.0px;font-size:12.10px;color:#4A4A4A;transform:scaleX(0.9);transform-origin:left;-webkit-text-stroke:0.15px currentColor">Тип билета</div><div style="position:absolute;left:347px;top:562px;width:88px;height:21px;background:#F2F2F2;box-shadow:inset 0 0 0 1px #fff"></div><div class="t" style="left:350px;top:567.0px;font-size:12.10px;color:#4A4A4A;transform:scaleX(0.9);transform-origin:left;-webkit-text-stroke:0.15px currentColor">Льгота(авто)</div><div style="position:absolute;left:347px;top:584px;width:88px;height:20px;background:#F2F2F2;box-shadow:inset 0 0 0 1px #fff"></div><div class="t" style="left:350px;top:589.0px;font-size:12.10px;color:#4A4A4A;transform:scaleX(0.9);transform-origin:left;-webkit-text-stroke:0.15px currentColor">Льгота</div><div style="position:absolute;left:436px;top:562px;width:90px;height:21px;background:#F2F2F2;box-shadow:inset 0 0 0 1px #fff"></div><div class="t" style="left:440px;top:567.0px;font-size:12.10px;color:#4A4A4A;transform:scaleX(0.9);transform-origin:left;-webkit-text-stroke:0.15px currentColor">Тар. план</div><div style="position:absolute;left:436px;top:584px;width:90px;height:20px;background:#F2F2F2;box-shadow:inset 0 0 0 1px #fff"></div><div class="t" style="left:440px;top:589.0px;font-size:12.10px;color:#4A4A4A;transform:scaleX(0.9);transform-origin:left;-webkit-text-stroke:0.15px currentColor">Цена</div><div style="position:absolute;left:527px;top:562px;width:132px;height:21px;background:#F2F2F2;box-shadow:inset 0 0 0 1px #fff"></div><div class="t" style="left:531px;top:567.0px;font-size:12.10px;color:#4A4A4A;transform:scaleX(0.9);transform-origin:left;-webkit-text-stroke:0.15px currentColor">Фамилия</div><div style="position:absolute;left:527px;top:584px;width:65px;height:20px;background:#F2F2F2;box-shadow:inset 0 0 0 1px #fff"></div><div class="t" style="left:531px;top:589.0px;font-size:12.10px;color:#4A4A4A;transform:scaleX(0.9);transform-origin:left;-webkit-text-stroke:0.15px currentColor">Имя</div><div style="position:absolute;left:593px;top:584px;width:66px;height:20px;background:#F2F2F2;box-shadow:inset 0 0 0 1px #fff"></div><div class="t" style="left:597px;top:589.0px;font-size:12.10px;color:#4A4A4A;transform:scaleX(0.9);transform-origin:left;-webkit-text-stroke:0.15px currentColor">Отчество</div><div style="position:absolute;left:660px;top:562px;width:106px;height:21px;background:#F2F2F2;box-shadow:inset 0 0 0 1px #fff"></div><div class="t" style="left:663px;top:567.0px;font-size:12.10px;color:#4A4A4A;transform:scaleX(0.9);transform-origin:left;-webkit-text-stroke:0.15px currentColor">Тип документа</div><div style="position:absolute;left:660px;top:584px;width:51px;height:20px;background:#F2F2F2;box-shadow:inset 0 0 0 1px #fff"></div><div class="t" style="left:663px;top:589.0px;font-size:12.10px;color:#4A4A4A;transform:scaleX(0.9);transform-origin:left;-webkit-text-stroke:0.15px currentColor">Серия</div><div style="position:absolute;left:712px;top:584px;width:54px;height:20px;background:#F2F2F2;box-shadow:inset 0 0 0 1px #fff"></div><div class="t" style="left:715px;top:589.0px;font-size:12.10px;color:#4A4A4A;transform:scaleX(0.9);transform-origin:left;-webkit-text-stroke:0.15px currentColor">Номер</div><div style="position:absolute;left:767px;top:562px;width:63px;height:21px;background:#F2F2F2;box-shadow:inset 0 0 0 1px #fff"></div><div class="t" style="left:771px;top:567.0px;font-size:12.10px;color:#4A4A4A;transform:scaleX(0.9);transform-origin:left;-webkit-text-stroke:0.15px currentColor">Пол</div><div style="position:absolute;left:767px;top:584px;width:63px;height:20px;background:#F2F2F2;box-shadow:inset 0 0 0 1px #fff"></div><div class="t" style="left:771px;top:589.0px;font-size:12.10px;color:#4A4A4A;transform:scaleX(0.9);transform-origin:left;-webkit-text-stroke:0.15px currentColor">Дата</div><div style="position:absolute;left:831px;top:562px;width:68px;height:21px;background:#F2F2F2;box-shadow:inset 0 0 0 1px #fff"></div><div class="t" style="left:833px;top:567.0px;font-size:12.10px;color:#4A4A4A;transform:scaleX(0.9);transform-origin:left;-webkit-text-stroke:0.15px currentColor">Гражданс...</div><div style="position:absolute;left:831px;top:584px;width:68px;height:20px;background:#F2F2F2;box-shadow:inset 0 0 0 1px #fff"></div><div class="t" style="left:833px;top:589.0px;font-size:12.10px;color:#4A4A4A;transform:scaleX(0.9);transform-origin:left;-webkit-text-stroke:0.15px currentColor">Коммента...</div><div style="position:absolute;left:900px;top:562px;width:223px;height:21px;background:#F2F2F2;box-shadow:inset 0 0 0 1px #fff"></div><div class="t" style="left:904px;top:567.0px;font-size:12.10px;color:#4A4A4A;transform:scaleX(0.9);transform-origin:left;-webkit-text-stroke:0.15px currentColor">Телефон (Пасс.)</div><div style="position:absolute;left:900px;top:584px;width:223px;height:20px;background:#F2F2F2;box-shadow:inset 0 0 0 1px #fff"></div><div class="t" style="left:904px;top:589.0px;font-size:12.10px;color:#4A4A4A;transform:scaleX(0.9);transform-origin:left;-webkit-text-stroke:0.15px currentColor">Электронная почта</div><div style="position:absolute;left:1124px;top:562px;width:36px;height:21px;background:#F2F2F2;box-shadow:inset 0 0 0 1px #fff"></div><div class="t" style="left:1128px;top:567.0px;font-size:12.10px;color:#4A4A4A;transform:scaleX(0.9);transform-origin:left;-webkit-text-stroke:0.15px currentColor">Дата</div><div style="position:absolute;left:1124px;top:584px;width:36px;height:20px;background:#F2F2F2;box-shadow:inset 0 0 0 1px #fff"></div><div class="t" style="left:1128px;top:589.0px;font-size:12.10px;color:#4A4A4A;transform:scaleX(0.9);transform-origin:left;-webkit-text-stroke:0.15px currentColor">Дата</div><div style="position:absolute;left:22px;top:605px;width:1131px;height:36px;background:#fff"></div><div style="position:absolute;left:22px;top:606px;width:40px;height:35px;background:#FFF1C9"></div><div class="t" style="right:1100px;top:611.0px;font-size:12.10px;color:#222;font-weight:400;transform:scaleX(0.9);transform-origin:right;-webkit-text-stroke:0.15px currentColor">1</div><div style="position:absolute;left:63px;top:606px;width:72px;height:17px;background:#FFFFFF"></div><div class="t" style="left:66px;top:610.0px;font-size:12.10px;color:#222;font-weight:400;transform:scaleX(0.9);transform-origin:left;-webkit-text-stroke:0.15px currentColor">Багаж (0)</div><div style="position:absolute;left:63px;top:624px;width:72px;height:17px;background:#FFF1C9"></div><div class="t" style="left:66px;top:628.0px;font-size:12.10px;color:#222;font-weight:400;transform:scaleX(0.9);transform-origin:left;-webkit-text-stroke:0.15px currentColor">Детский б...</div><div style="position:absolute;left:136px;top:606px;width:102px;height:17px;background:#FFE491"></div><div class="t" style="left:140px;top:610.0px;font-size:12.10px;color:#222;font-weight:400;transform:scaleX(0.9);transform-origin:left;-webkit-text-stroke:0.15px currentColor">Зайченко Иван ...</div><div style="position:absolute;left:136px;top:624px;width:102px;height:17px;background:#FFF1C9"></div><div style="position:absolute;left:239px;top:606px;width:40px;height:35px;background:#FFF1C9"></div><div class="t" style="right:883px;top:610px;font-size:12px;color:#222;font-weight:700">1</div><div style="position:absolute;left:280px;top:606px;width:66px;height:35px;background:#FFF1C9"></div><div class="t" style="left:284px;top:610.0px;font-size:12.10px;color:#222;font-weight:400;transform:scaleX(0.9);transform-origin:left;-webkit-text-stroke:0.15px currentColor">Билеты</div><div style="position:absolute;left:347px;top:606px;width:88px;height:17px;background:#FFF1C9"></div><div style="position:absolute;left:347px;top:624px;width:88px;height:17px;background:#FFF1C9"></div><div style="position:absolute;left:436px;top:606px;width:90px;height:17px;background:#FFF1C9"></div><div class="t" style="left:441px;top:610.0px;font-size:12.10px;color:#222;font-weight:400;transform:scaleX(0.9);transform-origin:left;-webkit-text-stroke:0.15px currentColor">Полный</div><div style="position:absolute;left:436px;top:624px;width:90px;height:17px;background:#FFF1C9"></div><div class="t" style="right:636px;top:628.0px;font-size:12.10px;color:#222;font-weight:400;transform:scaleX(0.9);transform-origin:right;-webkit-text-stroke:0.15px currentColor">650,00</div><div style="position:absolute;left:527px;top:606px;width:132px;height:17px;background:#FFF1C9"></div><div class="t" style="left:531px;top:610.0px;font-size:12.10px;color:#222;font-weight:400;transform:scaleX(0.9);transform-origin:left;-webkit-text-stroke:0.15px currentColor">Зайченко</div><div style="position:absolute;left:527px;top:624px;width:65px;height:17px;background:#FFF1C9"></div><div class="t" style="left:531px;top:628.0px;font-size:12.10px;color:#222;font-weight:400;transform:scaleX(0.9);transform-origin:left;-webkit-text-stroke:0.15px currentColor">Иван</div><div style="position:absolute;left:593px;top:624px;width:66px;height:17px;background:#FFF1C9"></div><div class="t" style="left:597px;top:628.0px;font-size:12.10px;color:#222;font-weight:400;transform:scaleX(0.9);transform-origin:left;-webkit-text-stroke:0.15px currentColor">Иванович</div><div style="position:absolute;left:660px;top:606px;width:106px;height:17px;background:#FFF1C9"></div><div class="t" style="left:664px;top:610.0px;font-size:12.10px;color:#222;font-weight:400;transform:scaleX(0.9);transform-origin:left;-webkit-text-stroke:0.15px currentColor">Паспорт РФ</div><div style="position:absolute;left:660px;top:624px;width:51px;height:17px;background:#FFF1C9"></div><div class="t" style="left:664px;top:628.0px;font-size:12.10px;color:#222;font-weight:400;transform:scaleX(0.9);transform-origin:left;-webkit-text-stroke:0.15px currentColor">0115</div><div style="position:absolute;left:712px;top:624px;width:54px;height:17px;background:#FFF1C9"></div><div class="t" style="left:716px;top:628.0px;font-size:12.10px;color:#222;font-weight:400;transform:scaleX(0.9);transform-origin:left;-webkit-text-stroke:0.15px currentColor">789663</div><div style="position:absolute;left:767px;top:606px;width:63px;height:17px;background:#FFF1C9"></div><div class="t" style="left:772px;top:610.0px;font-size:12.10px;color:#222;font-weight:400;transform:scaleX(0.9);transform-origin:left;-webkit-text-stroke:0.15px currentColor">М</div><div style="position:absolute;left:767px;top:624px;width:63px;height:17px;background:#FFF1C9"></div><div class="t" style="left:772px;top:628.0px;font-size:12.10px;color:#222;font-weight:400;transform:scaleX(0.9);transform-origin:left;-webkit-text-stroke:0.15px currentColor">12.02.1980</div><div style="position:absolute;left:831px;top:606px;width:68px;height:17px;background:#FFF1C9"></div><div class="t" style="left:834px;top:610.0px;font-size:12.10px;color:#222;font-weight:400;transform:scaleX(0.9);transform-origin:left;-webkit-text-stroke:0.15px currentColor">Россия</div><div style="position:absolute;left:831px;top:624px;width:68px;height:17px;background:#FFF1C9"></div><div style="position:absolute;left:900px;top:606px;width:223px;height:17px;background:#FFF1C9"></div><div style="position:absolute;left:900px;top:624px;width:223px;height:17px;background:#FFF1C9"></div><div style="position:absolute;left:1124px;top:606px;width:29px;height:17px;background:#FFF1C9"></div><div class="t" style="left:1128px;top:610.0px;font-size:12.10px;color:#222;font-weight:400;transform:scaleX(0.9);transform-origin:left;-webkit-text-stroke:0.15px currentColor">16.09</div><div style="position:absolute;left:1124px;top:624px;width:29px;height:17px;background:#FFF1C9"></div><div class="t" style="left:1128px;top:628.0px;font-size:12.10px;color:#222;font-weight:400;transform:scaleX(0.9);transform-origin:left;-webkit-text-stroke:0.15px currentColor">16.09</div><div style="position:absolute;left:22px;top:641px;width:1131px;height:1px;background:#E2E2E2"></div><div style="position:absolute;left:22px;top:642px;width:1131px;height:36px;background:#F3F9F6"></div><div style="position:absolute;left:22px;top:643px;width:40px;height:35px;background:#F3F9F6"></div><div class="t" style="right:1100px;top:648.0px;font-size:12.10px;color:#222;font-weight:400;transform:scaleX(0.9);transform-origin:right;-webkit-text-stroke:0.15px currentColor">2</div><div style="position:absolute;left:63px;top:643px;width:72px;height:17px;background:#FFFFFF"></div><div class="t" style="left:66px;top:647.0px;font-size:12.10px;color:#222;font-weight:400;transform:scaleX(0.9);transform-origin:left;-webkit-text-stroke:0.15px currentColor">Багаж (0)</div><div style="position:absolute;left:63px;top:661px;width:72px;height:17px;background:#F3F9F6"></div><div class="t" style="left:66px;top:665.0px;font-size:12.10px;color:#222;font-weight:400;transform:scaleX(0.9);transform-origin:left;-webkit-text-stroke:0.15px currentColor">Детский б...</div><div style="position:absolute;left:136px;top:643px;width:102px;height:17px;background:#F3F9F6"></div><div class="t" style="left:140px;top:647.0px;font-size:12.10px;color:#222;font-weight:400;transform:scaleX(0.9);transform-origin:left;-webkit-text-stroke:0.15px currentColor">Пустохин Влади...</div><div style="position:absolute;left:136px;top:661px;width:102px;height:17px;background:#F3F9F6"></div><div style="position:absolute;left:239px;top:643px;width:40px;height:35px;background:#F3F9F6"></div><div class="t" style="right:883px;top:647px;font-size:12px;color:#222;font-weight:700">2</div><div style="position:absolute;left:280px;top:643px;width:66px;height:35px;background:#F3F9F6"></div><div class="t" style="left:284px;top:647.0px;font-size:12.10px;color:#222;font-weight:400;transform:scaleX(0.9);transform-origin:left;-webkit-text-stroke:0.15px currentColor">Билеты</div><div style="position:absolute;left:347px;top:643px;width:88px;height:17px;background:#F3F9F6"></div><div style="position:absolute;left:347px;top:661px;width:88px;height:17px;background:#F3F9F6"></div><div style="position:absolute;left:436px;top:643px;width:90px;height:17px;background:#F3F9F6"></div><div class="t" style="left:441px;top:647.0px;font-size:12.10px;color:#222;font-weight:400;transform:scaleX(0.9);transform-origin:left;-webkit-text-stroke:0.15px currentColor">Полный</div><div style="position:absolute;left:436px;top:661px;width:90px;height:17px;background:#F3F9F6"></div><div class="t" style="right:636px;top:665.0px;font-size:12.10px;color:#222;font-weight:400;transform:scaleX(0.9);transform-origin:right;-webkit-text-stroke:0.15px currentColor">650,00</div><div style="position:absolute;left:527px;top:643px;width:132px;height:17px;background:#F3F9F6"></div><div class="t" style="left:531px;top:647.0px;font-size:12.10px;color:#222;font-weight:400;transform:scaleX(0.9);transform-origin:left;-webkit-text-stroke:0.15px currentColor">Пустохин</div><div style="position:absolute;left:527px;top:661px;width:65px;height:17px;background:#F3F9F6"></div><div class="t" style="left:531px;top:665.0px;font-size:12.10px;color:#222;font-weight:400;transform:scaleX(0.9);transform-origin:left;-webkit-text-stroke:0.15px currentColor">Владислав</div><div style="position:absolute;left:593px;top:661px;width:66px;height:17px;background:#F3F9F6"></div><div class="t" style="left:597px;top:665.0px;font-size:12.10px;color:#222;font-weight:400;transform:scaleX(0.9);transform-origin:left;-webkit-text-stroke:0.15px currentColor">Назарович</div><div style="position:absolute;left:660px;top:643px;width:106px;height:17px;background:#F3F9F6"></div><div class="t" style="left:664px;top:647.0px;font-size:12.10px;color:#222;font-weight:400;transform:scaleX(0.9);transform-origin:left;-webkit-text-stroke:0.15px currentColor">Паспорт РФ</div><div style="position:absolute;left:660px;top:661px;width:51px;height:17px;background:#F3F9F6"></div><div class="t" style="left:664px;top:665.0px;font-size:12.10px;color:#222;font-weight:400;transform:scaleX(0.9);transform-origin:left;-webkit-text-stroke:0.15px currentColor">7002</div><div style="position:absolute;left:712px;top:661px;width:54px;height:17px;background:#F3F9F6"></div><div class="t" style="left:716px;top:665.0px;font-size:12.10px;color:#222;font-weight:400;transform:scaleX(0.9);transform-origin:left;-webkit-text-stroke:0.15px currentColor">123458</div><div style="position:absolute;left:767px;top:643px;width:63px;height:17px;background:#F3F9F6"></div><div class="t" style="left:772px;top:647.0px;font-size:12.10px;color:#222;font-weight:400;transform:scaleX(0.9);transform-origin:left;-webkit-text-stroke:0.15px currentColor">М</div><div style="position:absolute;left:767px;top:661px;width:63px;height:17px;background:#F3F9F6"></div><div class="t" style="left:772px;top:665.0px;font-size:12.10px;color:#222;font-weight:400;transform:scaleX(0.9);transform-origin:left;-webkit-text-stroke:0.15px currentColor">02.02.1974</div><div style="position:absolute;left:831px;top:643px;width:68px;height:17px;background:#F3F9F6"></div><div class="t" style="left:834px;top:647.0px;font-size:12.10px;color:#222;font-weight:400;transform:scaleX(0.9);transform-origin:left;-webkit-text-stroke:0.15px currentColor">Россия</div><div style="position:absolute;left:831px;top:661px;width:68px;height:17px;background:#F3F9F6"></div><div style="position:absolute;left:900px;top:643px;width:223px;height:17px;background:#F3F9F6"></div><div class="t" style="left:904px;top:647.0px;font-size:12.10px;color:#222;font-weight:400;transform:scaleX(0.9);transform-origin:left;-webkit-text-stroke:0.15px currentColor">+7 (922) 233-55-44</div><div style="position:absolute;left:900px;top:661px;width:223px;height:17px;background:#F3F9F6"></div><div style="position:absolute;left:1124px;top:643px;width:29px;height:17px;background:#F3F9F6"></div><div class="t" style="left:1128px;top:647.0px;font-size:12.10px;color:#222;font-weight:400;transform:scaleX(0.9);transform-origin:left;-webkit-text-stroke:0.15px currentColor">16.09</div><div style="position:absolute;left:1124px;top:661px;width:29px;height:17px;background:#F3F9F6"></div><div class="t" style="left:1128px;top:665.0px;font-size:12.10px;color:#222;font-weight:400;transform:scaleX(0.9);transform-origin:left;-webkit-text-stroke:0.15px currentColor">16.09</div><div style="position:absolute;left:22px;top:680px;width:1131px;height:1px;background:#E2E2E2"></div></div><svg style="position:absolute;left:0;top:0" width="1157" height="713" viewBox="0 0 1157 713"><defs><filter id="sh" x="-20%" y="-20%" width="140%" height="140%"><feDropShadow dx="2" dy="3" stdDeviation="2.5" flood-color="#000" flood-opacity="0.35"/></filter><filter id="sh2" x="-20%" y="-20%" width="140%" height="140%"><feDropShadow dx="2" dy="3" stdDeviation="2" flood-color="#000" flood-opacity="0.45"/></filter></defs><g filter="url(#sh)"><rect x="803.5" y="239.5" width="82" height="34" fill="none" stroke="#FF3A00" stroke-width="3" stroke-dasharray="3 3"/><rect x="876.5" y="513.5" width="26" height="34" fill="none" stroke="#FF3A00" stroke-width="3" stroke-dasharray="3 3"/><rect x="435.5" y="604.5" width="400" height="81" fill="none" stroke="#FF3A00" stroke-width="3" stroke-dasharray="3 3"/></g><g filter="url(#sh2)"><path d="M634.0 313.0 L788.4 261.1" stroke="#3158B4" stroke-width="2.2" stroke-dasharray="2.1 1.7" fill="none"/><path d="M801.7 256.6 L785.0 269.6 L788.4 261.1 L780.5 256.3 Z" fill="#3158B4"/><path d="M762.0 465.0 L864.1 506.1" stroke="#3158B4" stroke-width="2.2" stroke-dasharray="2.1 1.7" fill="none"/><path d="M877.1 511.3 L855.9 510.3 L864.1 506.1 L861.2 497.3 Z" fill="#3158B4"/><path d="M741.0 472.0 L655.5 579.1" stroke="#3158B4" stroke-width="2.2" stroke-dasharray="2.1 1.7" fill="none"/><path d="M646.8 590.0 L653.8 570.0 L655.5 579.1 L664.7 578.7 Z" fill="#3158B4"/><path d="M194.0 457.0 L111.5 512.5" stroke="#3158B4" stroke-width="2.2" stroke-dasharray="2.1 1.7" fill="none"/><path d="M99.9 520.3 L112.6 503.3 L111.5 512.5 L120.4 514.9 Z" fill="#3158B4"/><rect x="614" y="308.5" width="20" height="20" rx="3.5" fill="#3459B2"/><text x="624" y="323.0" text-anchor="middle" font-family="Liberation Sans" font-weight="700" font-size="13.5" fill="#fff">1</text><rect x="741.5" y="454.5" width="20" height="20" rx="3.5" fill="#3459B2"/><text x="751.5" y="469.0" text-anchor="middle" font-family="Liberation Sans" font-weight="700" font-size="13.5" fill="#fff">2</text><rect x="191.5" y="437.5" width="20" height="20" rx="3.5" fill="#3459B2"/><text x="201.5" y="452.0" text-anchor="middle" font-family="Liberation Sans" font-weight="700" font-size="13.5" fill="#fff">3</text></g></svg></body></html>
